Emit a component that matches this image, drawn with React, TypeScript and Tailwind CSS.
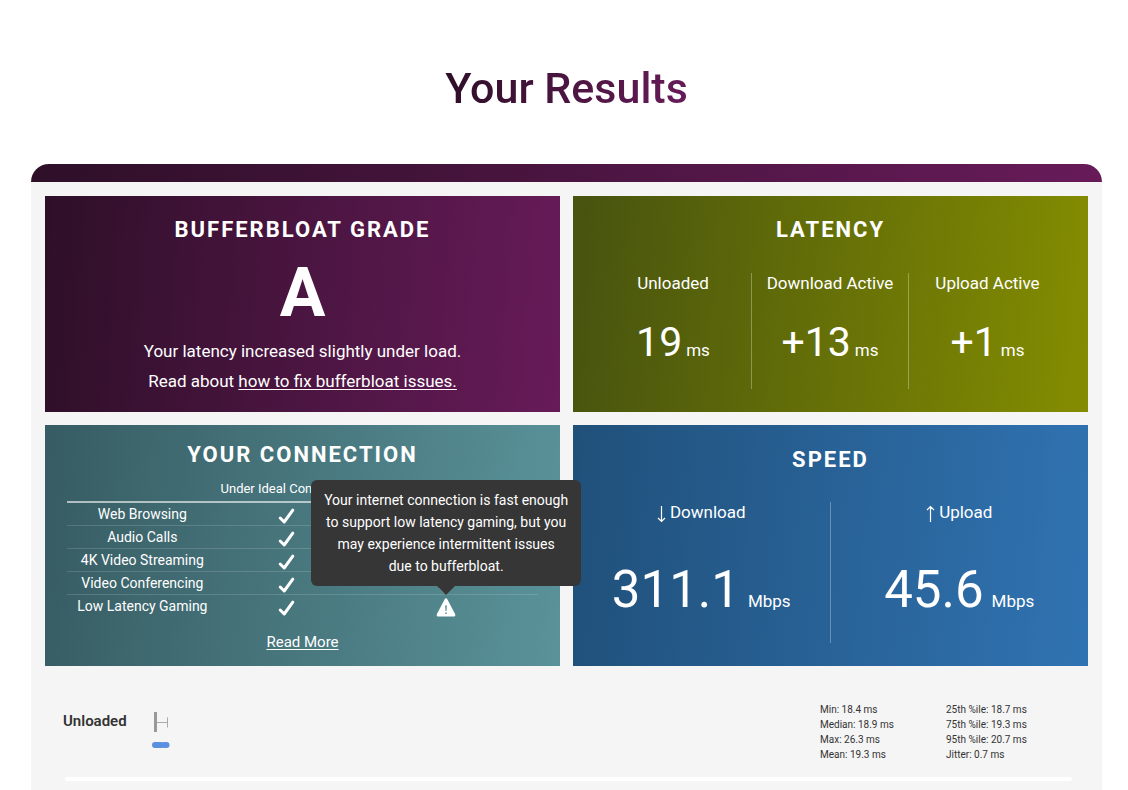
import type { ReactNode } from 'react';

const latency = [
  { label: 'Unloaded', value: '19' },
  { label: 'Download Active', value: '+13' },
  { label: 'Upload Active', value: '+1' },
];

const activities = [
  'Web Browsing',
  'Audio Calls',
  '4K Video Streaming',
  'Video Conferencing',
  'Low Latency Gaming',
];

const stats = [
  ['Min: 18.4 ms', 'Median: 18.9 ms', 'Max: 26.3 ms', 'Mean: 19.3 ms'],
  ['25th %ile: 18.7 ms', '75th %ile: 19.3 ms', '95th %ile: 20.7 ms', 'Jitter: 0.7 ms'],
];

function CardTitle({ children }: { children: ReactNode }) {
  return <h2 className="text-[22px] leading-7 font-bold tracking-[2px] uppercase">{children}</h2>;
}

function CheckIcon() {
  return (
    <svg className="mx-auto mt-1" width="17" height="17" viewBox="0 0 17 17" fill="none" role="img" aria-label="Yes">
      <path d="M2.2 10 L6.2 14 L14.8 2.2" stroke="currentColor" strokeWidth="3" strokeLinecap="round" strokeLinejoin="round" />
    </svg>
  );
}

function WarningIcon() {
  return (
    <svg width="20" height="19" viewBox="0 0 20 19" role="img" aria-label="Warning">
      <path
        fill="currentColor"
        fillRule="evenodd"
        d="M8.7 1.2 Q10 -0.5 11.3 1.2 L19.1 16 Q19.9 18.4 18 18.5 H2 Q0.1 18.4 0.9 16 Z M9.2 7.4 L9.5 13 H10.5 L10.8 7.4 Z M9.3 14.4 V16 H10.7 V14.4 Z"
      />
    </svg>
  );
}

function Arrow({ up = false }: { up?: boolean }) {
  return (
    <svg className="mt-1" width="9" height="18" viewBox="0 0 9 18" fill="none" stroke="currentColor" strokeWidth="1.2" aria-hidden="true">
      {up ? <path d="M4.5 17 V1.5 M1 5 L4.5 1.5 L8 5" /> : <path d="M4.5 1 V16.5 M1 13 L4.5 16.5 L8 13" />}
    </svg>
  );
}

function GradeCard() {
  return (
    <section className="bg-[linear-gradient(95deg,#2e0f28,#671b59)] px-5 pt-5 pb-4 text-center">
      <CardTitle>Bufferbloat Grade</CardTitle>
      <p className="mt-2 text-[68px] leading-[82px] font-bold">A</p>
      <p className="mt-[2px] text-[17px] leading-[30px]">
        Your latency increased slightly under load.
        <br />
        Read about{' '}
        <a href="#fix" className="underline underline-offset-2">
          how to fix bufferbloat issues.
        </a>
      </p>
    </section>
  );
}

function LatencyCard() {
  return (
    <section className="bg-[linear-gradient(95deg,#47530f,#848d00)] px-[22px] pt-5 pb-[23px] text-center">
      <CardTitle>Latency</CardTitle>
      <div className="mt-[29px] grid grid-cols-3 divide-x divide-white/30">
        {latency.map((item) => (
          <div key={item.label} className="h-[116px]">
            <h3 className="text-[17px] leading-5">{item.label}</h3>
            <p className="mt-[25px] text-[41px] leading-[48px]">
              {item.value}
              <span className="ml-1 text-[17px]">ms</span>
            </p>
          </div>
        ))}
      </div>
    </section>
  );
}

function ConnectionCard() {
  return (
    <section className="bg-[linear-gradient(95deg,#375c63,#5a9299)] px-[22px] pt-4 pb-3 text-center">
      <CardTitle>Your Connection</CardTitle>
      <table className="mt-[7px] w-full table-fixed border-collapse">
        <colgroup>
          <col className="w-[32%]" />
          <col className="w-[29%]" />
          <col className="w-[39%]" />
        </colgroup>
        <thead>
          <tr className="h-[26px] border-b-2 border-white/60 text-[13px] leading-5">
            <td />
            <th scope="col" className="p-0 font-normal whitespace-nowrap">Under Ideal Conditions</th>
            <th scope="col" className="p-0" aria-label="Under Normal Conditions" />
          </tr>
        </thead>
        <tbody className="divide-y divide-white/15">
          {activities.map((name, i) => (
            <tr key={name} className="h-[23px]">
              <th scope="row" className="p-0 text-[14px] leading-[22px] font-normal whitespace-nowrap">{name}</th>
              <td className="p-0">
                <CheckIcon />
              </td>
              <td className="p-0">
                {i < activities.length - 1 ? (
                  <CheckIcon />
                ) : (
                  <div className="relative mx-auto mt-[3px] h-[19px] w-5">
                    <button type="button" className="block" aria-describedby="gaming-tip">
                      <WarningIcon />
                    </button>
                    <div
                      id="gaming-tip"
                      role="tooltip"
                      className="absolute bottom-full left-1/2 z-10 mb-3 w-[270px] -translate-x-1/2 rounded-md bg-[#363636] px-1 py-[9px] text-[14px] leading-[22px]"
                    >
                      Your internet connection is fast enough
                      <br />
                      to support low latency gaming, but you
                      <br />
                      may experience intermittent issues
                      <br />
                      due to bufferbloat.
                      <div className="absolute top-full left-1/2 -translate-x-1/2 border-x-9 border-t-9 border-x-transparent border-t-[#363636]" />
                    </div>
                  </div>
                )}
              </td>
            </tr>
          ))}
        </tbody>
      </table>
      <a href="#more" className="mt-3 inline-block text-[15px] leading-6 underline underline-offset-2">
        Read More
      </a>
    </section>
  );
}

function SpeedCard() {
  return (
    <section className="bg-[linear-gradient(95deg,#20507a,#3073b2)] pt-[21px] pb-[23px] text-center">
      <CardTitle>Speed</CardTitle>
      <div className="mt-7 grid grid-cols-2 divide-x divide-white/30">
        <div className="h-[141px]">
          <h3 className="flex h-5 items-center justify-center gap-1 text-[17px] leading-5">
            <Arrow />
            Download
          </h3>
          <p className="mt-[38px] text-[51px] leading-[60px]">
            311.1<span className="ml-2 text-[17px]">Mbps</span>
          </p>
        </div>
        <div className="h-[141px]">
          <h3 className="flex h-5 items-center justify-center gap-1 text-[17px] leading-5">
            <Arrow up />
            Upload
          </h3>
          <p className="mt-[38px] text-[51px] leading-[60px]">
            45.6<span className="ml-2 text-[17px]">Mbps</span>
          </p>
        </div>
      </div>
    </section>
  );
}

function UnloadedStats() {
  return (
    <section className="pt-9 pr-4 pb-[9px] pl-[18px] text-[#333333]">
      <div className="flex items-start">
        <h3 className="w-[89px] pt-[7px] text-[15px] leading-6 font-semibold">Unloaded</h3>
        {/* Box plot with the samples under it */}
        <svg className="mt-2" width="20" height="40" viewBox="0 0 20 40" fill="none" role="img" aria-label="Unloaded latency distribution">
          <path d="M3.5 2 V22" stroke="#999999" strokeWidth="3" />
          <path d="M5 12.5 H15.5 M15.5 7.5 V17.5" stroke="#aaaaaa" />
          <path d="M3 35 H9 M13 35 H14.5" stroke="#5b8fe0" strokeWidth="6" strokeLinecap="round" />
          <path d="M8 35 H14" stroke="#5b8fe0" strokeWidth="5" />
        </svg>
        <div className="ml-auto flex">
          {stats.map((column) => (
            <ul key={column[0]} className="w-[126px] text-[10px] leading-[15px]">
              {column.map((text) => (
                <li key={text}>{text}</li>
              ))}
            </ul>
          ))}
        </div>
      </div>
      <div className="mt-[15px] ml-[2px] h-1 rounded-full bg-white" />
    </section>
  );
}

export default function App() {
  return (
    <main className="bg-white pr-[26px] pl-[31px] font-['Roboto',sans-serif]">
      <div className="pt-[60px] pb-[48px] text-center">
        <h1 className="inline-block bg-[linear-gradient(95deg,#2e0f28,#671b59)] bg-clip-text text-[43px] leading-14 font-medium text-transparent">
          Your Results
        </h1>
      </div>
      <div className="h-[18px] rounded-t-[18px] bg-[linear-gradient(95deg,#2e0f28,#671b59)]" />
      <div className="bg-[#f5f5f5] px-[14px] pt-[14px]">
        <div className="grid grid-cols-2 gap-[13px] text-white">
          <GradeCard />
          <LatencyCard />
          <ConnectionCard />
          <SpeedCard />
        </div>
        <UnloadedStats />
      </div>
    </main>
  );
}
